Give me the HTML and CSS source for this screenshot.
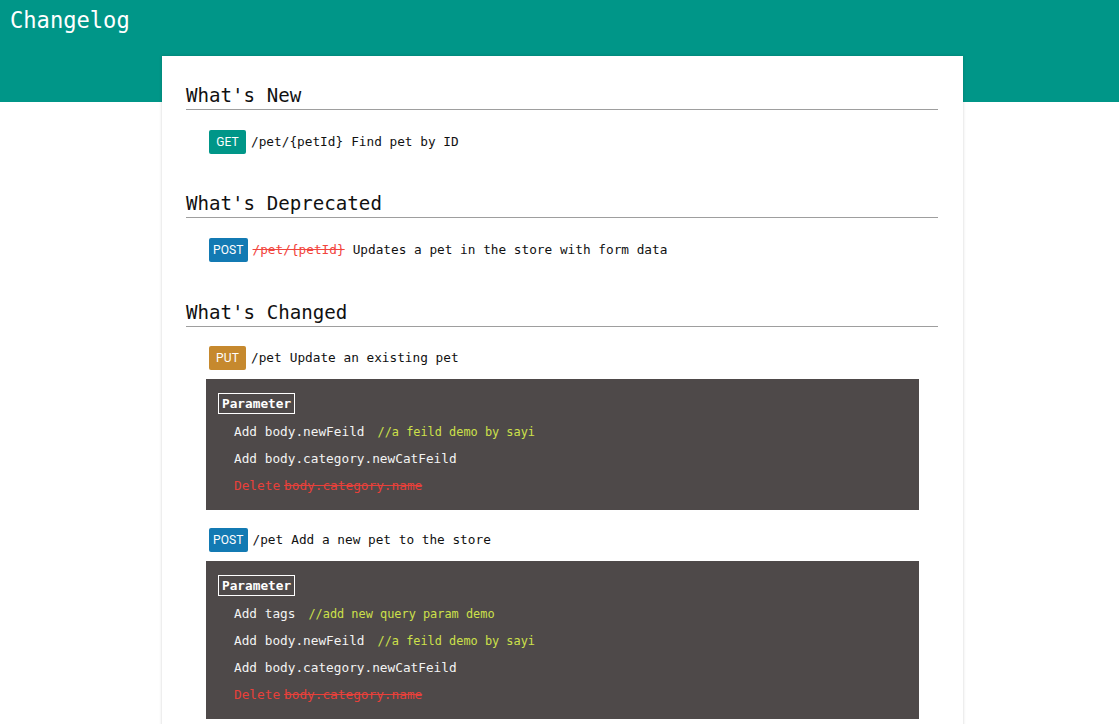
FILE: index.html
```html
<!DOCTYPE html>
<html>
<head>
<meta charset="utf-8">
<title>Changelog</title>
<link rel="stylesheet" href="styles.css">
</head>
<body>
<header class="topbar">
  <div class="title">Changelog</div>
</header>
<main class="card">
  <section class="section">
    <h2 class="section-title">What's New</h2>
    <div class="endpoint">
      <span class="badge badge-get">GET</span>
      <span class="path">/pet/{petId}</span>
      <span class="summary">Find pet by ID</span>
    </div>
  </section>

  <section class="section">
    <h2 class="section-title">What's Deprecated</h2>
    <div class="endpoint">
      <span class="badge badge-post">POST</span>
      <span class="path path-deprecated">/pet/{petId}</span>
      <span class="summary">Updates a pet in the store with form data</span>
    </div>
  </section>

  <section class="section section-changed">
    <h2 class="section-title">What's Changed</h2>
    <div class="endpoint endpoint-changed">
      <span class="badge badge-put">PUT</span>
      <span class="path">/pet</span>
      <span class="summary">Update an existing pet</span>
    </div>
    <div class="diff">
      <div class="diff-label">Parameter</div>
      <div class="diff-line">Add body.newFeild<span class="comment">//a feild demo by sayi</span></div>
      <div class="diff-line">Add body.category.newCatFeild</div>
      <div class="diff-line diff-delete">Delete<span class="deleted">body.category.name</span></div>
    </div>

    <div class="endpoint endpoint-changed">
      <span class="badge badge-post">POST</span>
      <span class="path">/pet</span>
      <span class="summary">Add a new pet to the store</span>
    </div>
    <div class="diff">
      <div class="diff-label">Parameter</div>
      <div class="diff-line">Add tags<span class="comment">//add new query param demo</span></div>
      <div class="diff-line">Add body.newFeild<span class="comment">//a feild demo by sayi</span></div>
      <div class="diff-line">Add body.category.newCatFeild</div>
      <div class="diff-line diff-delete">Delete<span class="deleted">body.category.name</span></div>
    </div>
  </section>
</main>
</body>
</html>
```

FILE: styles.css
```css
* { box-sizing: border-box; }
html, body { margin: 0; padding: 0; background: #ffffff; }
body {
  font-family: "DejaVu Sans Mono", "Liberation Mono", monospace;
  font-size: 12.75px;
  color: #111111;
  overflow: hidden;
  height: 724px;
}
.topbar {
  background: #009688;
  height: 102px;
  padding: 6px 10px;
}
.title {
  color: #ffffff;
  font-size: 22.1px;
  line-height: 28px;
}
.card {
  width: 801px;
  margin: -46px 0 0 162px;
  background: #ffffff;
  box-shadow: 0 0 3px rgba(0,0,0,0.18);
  padding: 25px 25px 40px 24px;
  min-height: 700px;
}
.section + .section { margin-top: 35px; }
.section + .section-changed { margin-top: 36px; }
.section-title {
  margin: 0;
  font-weight: normal;
  font-size: 19.15px;
  line-height: 27px;
  padding-top: 1px;
  border-bottom: 1px solid #9e9e9e;
  color: #111111;
}
.endpoint {
  display: flex;
  align-items: center;
  gap: 5px;
  margin: 20px 0 0 23px;
  height: 24px;
}
.endpoint .path, .endpoint .summary { position: relative; top: -1px; }
.endpoint-changed { margin-top: 19px; }
.diff + .endpoint-changed { margin-top: 18px; }
.badge {
  display: inline-flex;
  align-items: center;
  justify-content: center;
  min-width: 37px;
  height: 24px;
  padding: 0 4px;
  border-radius: 2px;
  color: #ffffff;
  font-family: Roboto, "Liberation Sans", sans-serif;
  font-size: 12px;
  letter-spacing: 0.1px;
}
.badge-get { background: #009688; }
.badge-post { background: #137ab3; }
.badge-put { background: #c6892e; }
.summary { margin-left: 3px; }
.path-deprecated {
  color: #f2453d;
  text-decoration: line-through;
}
.diff {
  background: #4e4949;
  color: #f3f3f3;
  margin: 9px 19px 0 20px;
  padding: 14px 12px 11px;
}
.diff-label {
  display: inline-block;
  border: 1px solid #ffffff;
  color: #ffffff;
  font-weight: bold;
  line-height: 19px;
  padding: 0 3px;
  margin-bottom: 4px;
}
.diff-line {
  height: 27px;
  line-height: 27px;
  padding-left: 16px;
}
.comment {
  color: #cde04a;
  margin-left: 13px;
  font-size: 11.9px;
  line-height: 1;
}
.diff-delete { color: #e8403a; }
.deleted {
  margin-left: 4px;
  text-decoration: line-through;
}
```
